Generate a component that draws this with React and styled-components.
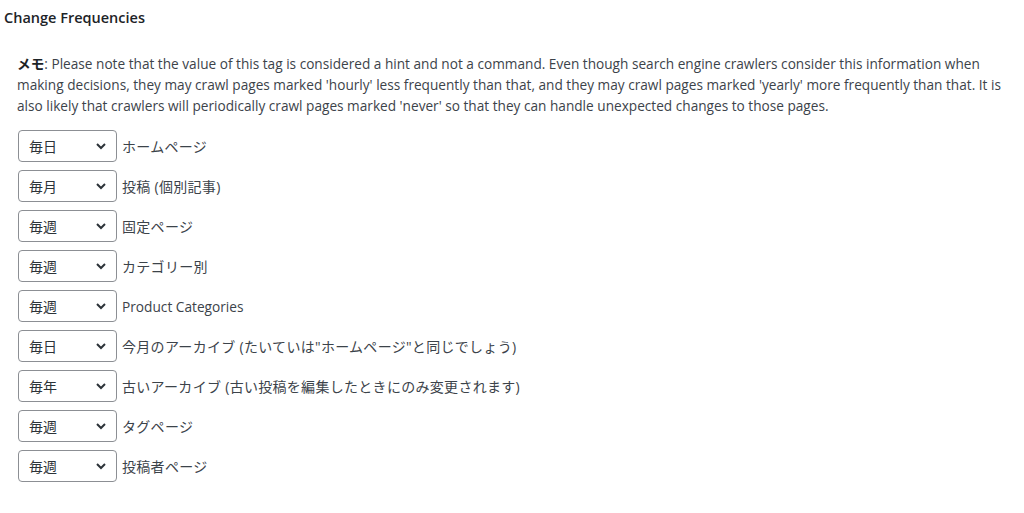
import React from "react";
import styled, { createGlobalStyle } from "styled-components";

const Global = createGlobalStyle`
  html, body { margin: 0; padding: 0; background: #fff; }
  body { font-family: "Open Sans", "Noto Sans CJK JP", sans-serif; color: #3c434a; font-size: 14px; }
`;

const Page = styled.div`
  padding: 8px 4px 0 4px;
`;

const Title = styled.h3`
  margin: 0;
  font-size: 14.5px;
  font-weight: 600;
  line-height: 20px;
  color: #1d2327;
`;

const Body = styled.div`
  padding: 25px 13px 0 13px;
`;

const Note = styled.p`
  margin: 0 0 14px 0;
  line-height: 21px;
  font-size: 13.65px;
  width: 992px;
  color: #3c434a;
  b { font-weight: 700; color: #1d2327; }
`;

const List = styled.div`
  display: flex;
  flex-direction: column;
  gap: 8px;
  padding-left: 1px;
`;

const Row = styled.div`
  display: flex;
  align-items: center;
  gap: 5px;
  height: 32px;
`;

const SelectBox = styled.div`
  position: relative;
  width: 99px;
  height: 32px;
  box-sizing: border-box;
  border: 1px solid #8c8f94;
  border-radius: 4px;
  display: flex;
  align-items: center;
  padding-left: 10px;
  font-size: 14px;
  color: #2c3338;
`;

const Chevron = styled.svg`
  position: absolute;
  right: 9px;
  top: 50%;
  margin-top: -5px;
`;

const Label = styled.span`
  font-size: ${(p) => (p.$cjk ? "14px" : "13.7px")};
  letter-spacing: ${(p) => (p.$cjk ? "0.3px" : "0")};
  color: #3c434a;
`;

const rows = [
  ["毎日", "ホームページ", true],
  ["毎月", "投稿 (個別記事)", true],
  ["毎週", "固定ページ", true],
  ["毎週", "カテゴリー別", true],
  ["毎週", "Product Categories", false],
  ["毎日", "今月のアーカイブ (たいていは\"ホームページ\"と同じでしょう)", true],
  ["毎年", "古いアーカイブ (古い投稿を編集したときにのみ変更されます)", true],
  ["毎週", "タグページ", true],
  ["毎週", "投稿者ページ", true],
];

export default function App() {
  return (
    <Page>
      <Global />
      <Title>Change Frequencies</Title>
      <Body>
        <Note>
          <b>メモ</b>: Please note that the value of this tag is considered a hint and not a command. Even though search engine crawlers consider this information when making decisions, they may crawl pages marked 'hourly' less frequently than that, and they may crawl pages marked 'yearly' more frequently than that. It is also likely that crawlers will periodically crawl pages marked 'never' so that they can handle unexpected changes to those pages.
        </Note>
        <List>
          {rows.map(([v, l, cjk], i) => (
            <Row key={i}>
              <SelectBox>
                {v}
                <Chevron width="12" height="10" viewBox="0 0 12 10">
                  <path d="M2 3 L6 7 L10 3" fill="none" stroke="#2c3338" strokeWidth="2" />
                </Chevron>
              </SelectBox>
              <Label $cjk={cjk}>{l}</Label>
            </Row>
          ))}
        </List>
      </Body>
    </Page>
  );
}
